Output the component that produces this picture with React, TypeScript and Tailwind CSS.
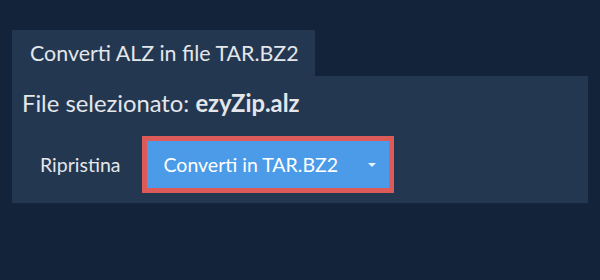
import React from "react";

export default function App() {
  return (
    <div className="w-[600px] h-[280px] bg-[#13233a] pt-[30px] px-[12px]" style={{ fontFamily: "Lato, 'Open Sans', sans-serif" }}>
      <div className="flex">
        <div className="h-[46px] w-[303px] bg-[#233750] flex items-center pl-[18px] text-[21.4px] text-[#e3e6ea]">
          Converti ALZ in file TAR.BZ2
        </div>
      </div>
      <div className="h-[127px] bg-[#233750] pl-[10px] pt-[12px]">
        <div className="text-[23.8px] text-[#e3e6ea] leading-[30px]">
          File selezionato: <span className="font-bold">ezyZip.alz</span>
        </div>
        <div className="flex items-center mt-[18px]">
          <button className="text-[19.5px] text-[#e3e6ea] pl-[18px] pr-[21px] h-[47px]">Ripristina</button>
          <div className="border-[5px] border-[#dc5b58]">
            <div className="w-[242px] h-[47px] bg-[#4c9be8] flex items-center text-[19.5px] text-white">
              <span className="pl-[17px]">Converti in TAR.BZ2</span>
              <svg className="ml-auto mr-[13px]" width="8" height="4" viewBox="0 0 8 4"><path d="M0 0 L8 0 L4 4 Z" fill="#e8f0fa" /></svg>
            </div>
          </div>
        </div>
      </div>
    </div>
  );
}
